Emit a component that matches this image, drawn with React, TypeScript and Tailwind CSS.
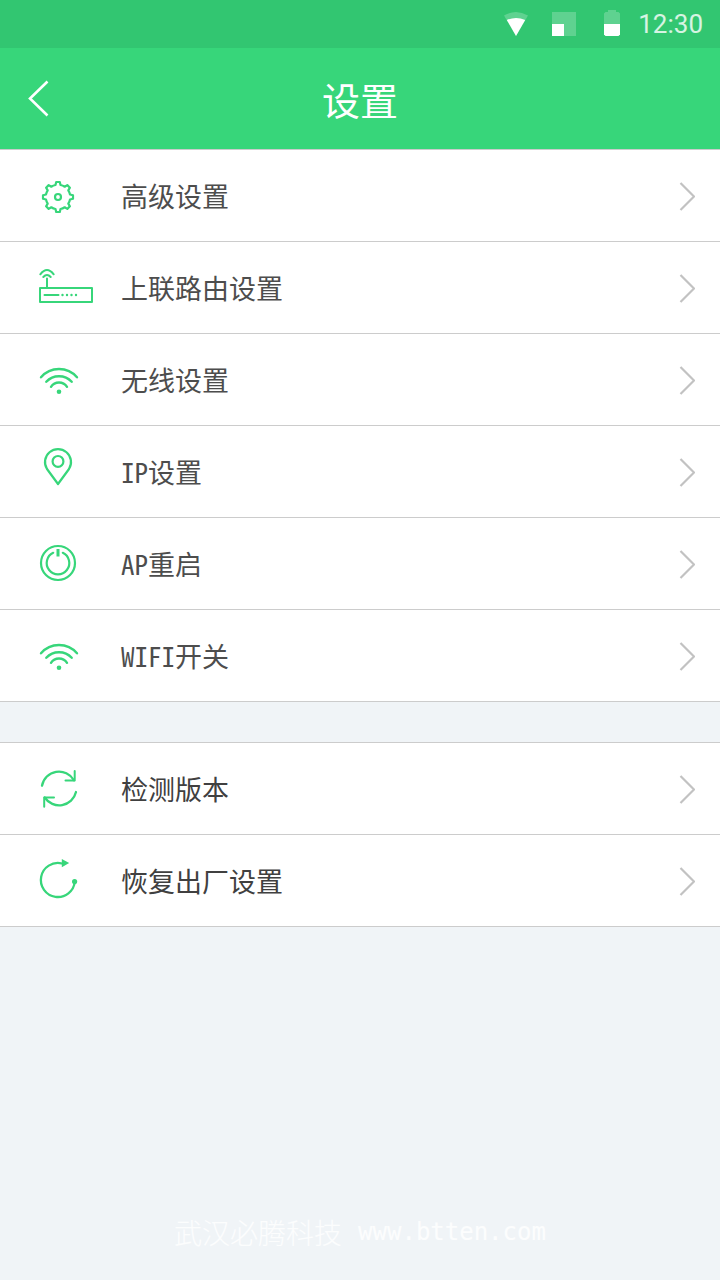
import React from 'react';

function GearIcon() {
  return (
    <g transform="translate(20 25)" strokeWidth="2.2">
      <path d="M-2.5-12L-1.8-15H1.8L2.5-12A12.3 12.3 0 0 1 6.7-10.3L9.3-11.9L11.9-9.3L10.3-6.7A12.3 12.3 0 0 1 12-2.5L15-1.8V1.8L12 2.5A12.3 12.3 0 0 1 10.3 6.7L11.9 9.3L9.3 11.9L6.7 10.3A12.3 12.3 0 0 1 2.5 12L1.8 15H-1.8L-2.5 12A12.3 12.3 0 0 1-6.7 10.3L-9.3 11.9L-11.9 9.3L-10.3 6.7A12.3 12.3 0 0 1-12 2.5L-15 1.8V-1.8L-12-2.5A12.3 12.3 0 0 1-10.3-6.7L-11.9-9.3L-9.3-11.9L-6.7-10.3A12.3 12.3 0 0 1-2.5-12Z" />
      <circle r="3" />
    </g>
  );
}

function RouterIcon() {
  return (
    <g strokeWidth="2">
      <rect x="2" y="24" width="52" height="14" />
      <path d="M9 14.5V24M5.3 13Q9 9 12.7 13M2.3 10.3Q9 1.8 15.7 10.3M6.5 31H20.5" />
      <path d="M24.5 31h.01M29 31h.01M33.5 31h.01M38 31h.01" strokeWidth="2.4" />
    </g>
  );
}

function WifiIcon() {
  return (
    <g transform="translate(0 -1)" strokeWidth="2.4">
      <path d="M3 22.3A23.7 23.7 0 0 1 39 22.3M8.3 26.8A17.2 17.2 0 0 1 33.7 26.8M13 31.8A9.6 9.6 0 0 1 29 31.8" />
      <circle cx="21" cy="36.7" r="2.3" fill="currentColor" stroke="none" />
    </g>
  );
}

function PinIcon() {
  return (
    <g strokeWidth="2.2">
      <path d="M20 36L9 21A13 13 0 1 1 31 21Z" />
      <circle cx="20" cy="13.4" r="5.4" />
    </g>
  );
}

function PowerIcon() {
  return (
    <g strokeWidth="2.2">
      <circle cx="20" cy="23" r="17" />
      <path d="M24.8 12.8A11.3 11.3 0 1 1 15.2 12.8" />
      <path d="M20 9V16.5" strokeWidth="3" strokeLinecap="butt" />
    </g>
  );
}

function RefreshIcon() {
  return (
    <g strokeWidth="2">
      <path d="M4 20.7A17.3 17.3 0 0 1 36 15.2M38 27A17.3 17.3 0 0 1 6.7 32.5" strokeWidth="2.3" />
      <path d="M36.7 6V15.4H27.5M6.2 41.8V32.4H16" />
    </g>
  );
}

function RestoreIcon() {
  return (
    <g strokeWidth="2.3">
      <path d="M24 6.5A17 17 0 1 0 36.8 24.5" />
      <path d="M23.8 2L31.2 6.1L23.8 10.3Z" fill="currentColor" stroke="none" />
      <circle cx="36.6" cy="24.6" r="2.6" fill="currentColor" stroke="none" />
    </g>
  );
}

const mainItems = [
  { label: '高级设置', Icon: GearIcon },
  { label: '上联路由设置', Icon: RouterIcon },
  { label: '无线设置', Icon: WifiIcon },
  { label: 'IP设置', Icon: PinIcon },
  { label: 'AP重启', Icon: PowerIcon },
  { label: 'WIFI开关', Icon: WifiIcon },
];

const systemItems = [
  { label: '检测版本', Icon: RefreshIcon },
  { label: '恢复出厂设置', Icon: RestoreIcon },
];

type Item = { label: string; Icon: () => React.ReactElement };

function SettingsList({ items, tone }: { items: Item[]; tone: string }) {
  return (
    <ul className="bg-white border-t border-[#cccccc]">
      {items.map(({ label, Icon }) => (
        <li key={label} className="border-b border-[#cccccc]">
          <a href="#" className="flex items-center h-[91px] pl-[38px] pr-[25px]">
            <svg
              width="56"
              height="47"
              viewBox="0 0 56 47"
              fill="none"
              stroke="currentColor"
              strokeLinecap="round"
              strokeLinejoin="round"
              className="shrink-0 overflow-visible text-[#37d67a]"
            >
              <Icon />
            </svg>
            <span className={`flex-1 ml-[27px] text-[27px] leading-[39px] [font-feature-settings:'hwid'] ${tone}`}>
              {label}
            </span>
            <svg width="16" height="31" viewBox="0 0 16 31" fill="none" className="shrink-0">
              <path d="M1.5 3L15 16.5L1.5 30" stroke="#c2c2c2" strokeWidth="2.2" />
            </svg>
          </a>
        </li>
      ))}
    </ul>
  );
}

function StatusBar() {
  return (
    <div className="flex items-center justify-end h-12 pr-[17px] bg-[#32c671] text-white">
      <svg width="24" height="28" viewBox="0 0 24 28" fill="currentColor">
        <path d="M0 5.5Q12-1.5 24 5.5L12 26Z" opacity="0.22" />
        <path d="M2.8 10Q12 6 21.2 10L12 26Z" />
      </svg>
      <svg width="24" height="28" viewBox="0 0 24 28" fill="currentColor" className="ml-6">
        <path d="M0 2H24V26H0Z" opacity="0.22" />
        <path d="M0 14H12V26H0Z" />
      </svg>
      <svg width="16" height="28" viewBox="0 0 16 28" fill="currentColor" className="ml-7">
        <path d="M4 0H12V2H14.5L16 3.5V14H0V3.5L1.5 2H4Z" opacity="0.22" />
        <path d="M0 14H16V24.5L14.5 26H1.5L0 24.5Z" />
      </svg>
      <span className="ml-[18px] text-[26px] leading-8 font-[Roboto,sans-serif] text-white/80">12:30</span>
    </div>
  );
}

export default function App() {
  return (
    <div className="flex flex-col min-h-screen bg-[#f0f4f7] font-['Noto_Sans_CJK_SC',sans-serif]">
      <StatusBar />

      {/* title bar */}
      <header className="grid grid-cols-[1fr_auto_1fr] items-center h-[101px] px-7 bg-[#37d67a] text-white">
        <button type="button" aria-label="返回" className="justify-self-start">
          <svg width="22" height="37" viewBox="0 0 22 37" fill="none" className="block">
            <path d="M19.5 1.5L2 18.5L19.5 35.5" stroke="currentColor" strokeWidth="2.6" />
          </svg>
        </button>
        <h1 className="text-[38px] leading-[52px]">设置</h1>
      </header>

      <main className="flex flex-col gap-10">
        <SettingsList items={mainItems} tone="text-[#4d4d4d]" />
        <SettingsList items={systemItems} tone="text-[#404040]" />
      </main>

      {/* company line */}
      <footer className="flex items-center justify-center gap-4 mt-auto pb-7 leading-10 text-white/80">
        <span className="text-[28px] font-light">武汉必腾科技</span>
        <span className="text-[24px] font-['DejaVu_Sans_Mono',monospace]">www.btten.com</span>
      </footer>
    </div>
  );
}
